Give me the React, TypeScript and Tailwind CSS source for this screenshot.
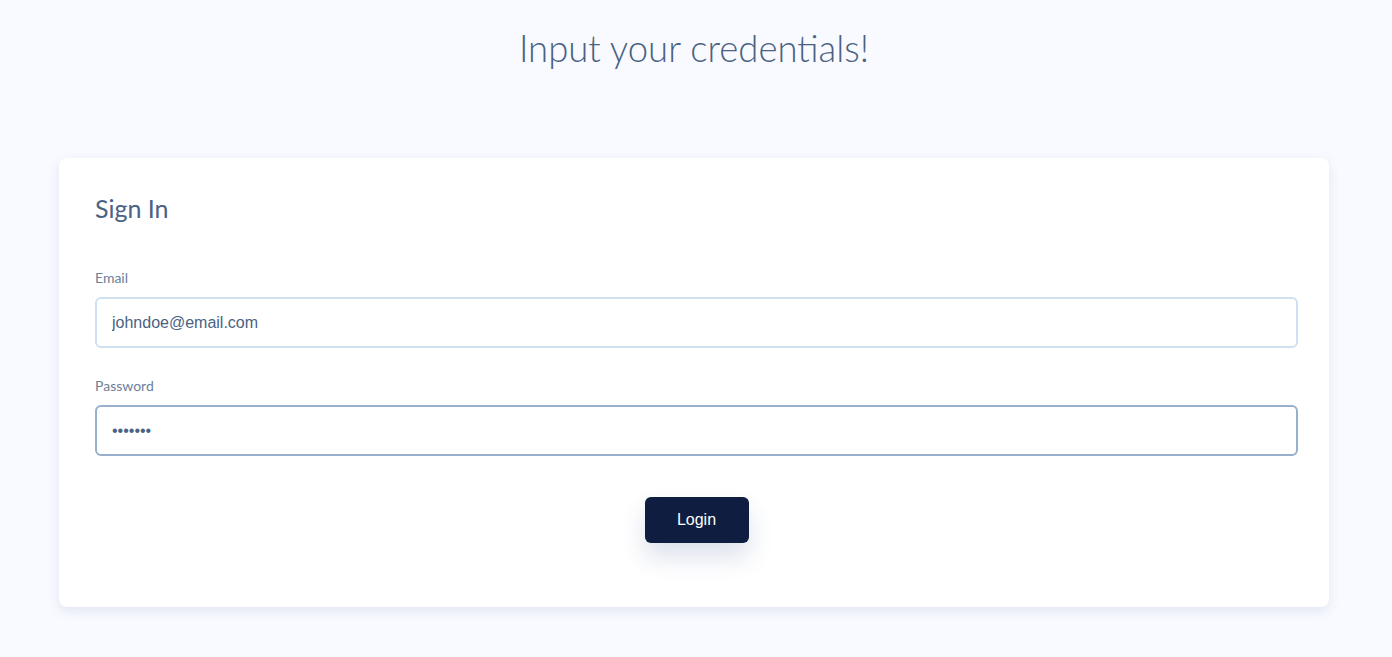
const App = () => {
  return (
    <div className="min-h-[657px] bg-[#f8faff] pl-[59px] pr-[63px] pt-[28px] pb-[50px]" style={{ fontFamily: "Lato, 'Noto Sans', sans-serif" }}>
      <h1 className="text-center text-[36.5px] leading-[40px] font-light text-[#4a6283]">Input your credentials!</h1>

      <div className="mt-[90px] rounded-[8px] bg-white pl-[36px] pr-[31px] pt-[34px] pb-[64px] shadow-[0_4px_12px_rgba(60,80,130,0.12)]">
        <h2 className="text-[25px] leading-[32px] font-normal text-[#4a6283]">Sign In</h2>

        <form className="mt-[44px] flex flex-col" onSubmit={(e) => e.preventDefault()}>
          <label className="text-[14px] leading-[20px] text-[#6b7f99]">Email</label>
          <input
            type="email"
            defaultValue="johndoe@email.com"
            className="mt-[9px] h-[51px] w-full rounded-[6px] border-2 border-[#cfe0f0] px-[15px] text-[16px] text-[#4a6283] outline-none"
            style={{ fontFamily: "'Liberation Sans', Arial, sans-serif" }}
          />

          <label className="mt-[28px] text-[14px] leading-[20px] text-[#6b7f99]">Password</label>
          <input
            type="password"
            defaultValue="secret1"
            className="mt-[9px] h-[51px] w-full rounded-[6px] border-2 border-[#98b0cc] px-[15px] text-[16px] text-[#4a6283] outline-none"
            style={{ fontFamily: "'Liberation Sans', Arial, sans-serif" }}
          />

          <div className="mt-[41px] flex justify-center">
            <button
              type="submit"
              className="h-[46px] w-[104px] rounded-[6px] bg-[#0e1d40] text-[16px] text-white shadow-[0_14px_24px_rgba(40,70,130,0.16)]"
              style={{ fontFamily: "'Liberation Sans', Arial, sans-serif" }}
            >
              Login
            </button>
          </div>
        </form>
      </div>
    </div>
  );
};

export default App;
